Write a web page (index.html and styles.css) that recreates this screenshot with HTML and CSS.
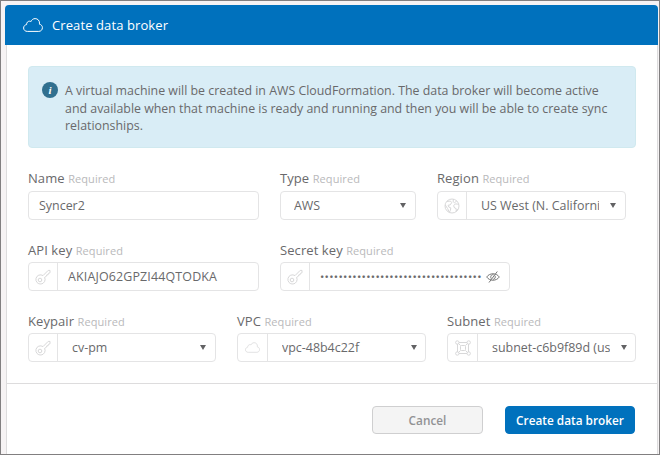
FILE: index.html
```html
<!DOCTYPE html>
<html lang="en">
<head>
<meta charset="utf-8">
<title>Create data broker</title>
<link rel="stylesheet" href="styles.css">
</head>
<body>
<svg class="defs" width="0" height="0">
  <symbol id="cloud" viewBox="0 0 20 14"><path d="M4.300 13.400C2.200 13.400.6 12 .6 10c0-1.900 1.400-3.200 3-3.400C3.500 4.500 4.900 3.200 6.500 3.200c.6 0 1.100.1 1.500.4C8.700 1.700 10.200.6 12.100.6c2.600 0 4.500 2 4.400 4.500 0 .4 0 .7-.1 1.100 1.800.3 3 1.700 3 3.500 0 2.100-1.500 3.700-3.600 3.700z"/></symbol>
  <symbol id="key" viewBox="0 0 16 16"><path d="M8 6.600 13.200 1.400H15v2.400l-1.500.5-.3 1.300-1.400.3-.3 1.200L9.600 8.400A4.600 4.600 0 1 1 8 6.600z"/><circle cx="5" cy="11" r="1.800"/></symbol>
  <symbol id="globe" viewBox="0 0 16 16"><circle cx="8" cy="8" r="7"/><path d="M3 3.500 6.400 3l1.300 1.600-1.400 2.200-2.200.5.8 1.800 1.900.8-.4 2.500-1 1.800-1.800-3.600L1.300 7M9.500 1.200 9 3.500l1.500 1.200L12.700 3M14.800 6.200l-3.500-.3-1.700 1.900 1 2.200 1.500.5.200 2.800 1.900-2.600"/></symbol>
  <symbol id="subnet" viewBox="0 0 16 16"><path d="M4 2.500h8M4 13.500h8M2.500 4v8M13.500 4v8M3.500 3.500l2 2M12.500 3.500l-2 2M3.500 12.500l2-2M12.500 12.500l-2-2"/><circle cx="2.300" cy="2.500" r="1.700"/><circle cx="13.700" cy="2.500" r="1.700"/><circle cx="2.300" cy="13.500" r="1.700"/><circle cx="13.700" cy="13.500" r="1.700"/><rect x="5.500" y="5.500" width="5" height="5" rx="1"/></symbol>
</svg>
<div class="frame">
  <section class="modal">
    <header class="header"><svg class="header-icon"><use href="#cloud"/></svg><h1>Create data broker</h1></header>
    <div class="content">
      <div class="alert">
        <span class="info">i</span>
        <p>A virtual machine will be created in AWS CloudFormation. The data broker will become active<br>and available when that machine is ready and running and then you will be able to create sync<br>relationships.</p>
      </div>
      <div class="row row-main">
        <div class="field"><label>Name <small>Required</small></label><div class="control"><span class="value">Syncer2</span></div></div>
        <div class="field"><label>Type <small>Required</small></label><div class="control select type"><span class="value">AWS</span><i class="caret"></i></div></div>
        <div class="field"><label>Region <small>Required</small></label><div class="control select"><span class="addon"><svg class="icon"><use href="#globe"/></svg></span><span class="value">US West (N. California)</span><i class="caret"></i></div></div>
      </div>
      <div class="row row-keys">
        <div class="field"><label>API key <small>Required</small></label><div class="control"><span class="addon"><svg class="icon"><use href="#key"/></svg></span><span class="value api-key">AKIAJO62GPZI44QTODKA</span></div></div>
        <div class="field"><label>Secret key <small>Required</small></label><div class="control secret"><span class="addon"><svg class="icon"><use href="#key"/></svg></span><span class="value dots">•••••••••••••••••••••••••••••••••••</span><svg class="eye" viewBox="0 0 14 12"><path d="M.7 6C3.500 1.700 10.500 1.700 13.300 6 10.500 10.300 3.500 10.300.7 6zM11.300.5 3 11.500M7.500 3.700C5 3.300 4 6 5.300 7.700M9 4.700c.8 1.500 0 3.300-1.800 3.700"/></svg></div></div>
      </div>
      <div class="row row-network">
        <div class="field"><label>Keypair <small>Required</small></label><div class="control select"><span class="addon"><svg class="icon"><use href="#key"/></svg></span><span class="value">cv-pm</span><i class="caret"></i></div></div>
        <div class="field"><label>VPC <small>Required</small></label><div class="control select wide-addon"><span class="addon"><svg class="icon small-cloud"><use href="#cloud"/></svg></span><span class="value">vpc-48b4c22f</span><i class="caret"></i></div></div>
        <div class="field"><label>Subnet <small>Required</small></label><div class="control select wide-addon"><span class="addon"><svg class="icon"><use href="#subnet"/></svg></span><span class="value">subnet-c6b9f89d (us</span><i class="caret"></i></div></div>
      </div>
    </div>
    <footer class="footer"><button class="btn cancel">Cancel</button><button class="btn primary">Create data broker</button></footer>
  </section>
</div>
</body>
</html>
```
FILE: styles.css
```css
* { box-sizing: border-box; }
body { margin: 0; font: 13px "Open Sans", sans-serif; color: #69696b; }
.defs { display: block; }
.frame { height: 455px; padding: 4px 1px 0 4px; border: 1px solid #817f80; background: #f6f3f4; overflow: hidden; }
svg { fill: none; stroke: currentColor; stroke-width: 1; flex: none; }
.modal { height: 449px; }
.header { display: flex; align-items: center; height: 40px; padding-left: 18px; background: #0071bd; color: #fff; border-radius: 4px 4px 0 0; }
.header-icon { width: 20px; height: 14px; }
h1 { margin: 0 0 0 9px; font-size: 13px; font-weight: 400; letter-spacing: .1px; }
.content { height: 339px; margin: 0 0 0 1px; padding: 21px 21px 0; background: #fff; border: solid #dddcdd; border-width: 0 1px 1px; }
.alert { display: flex; height: 82px; padding: 15px 13px; background: #d9edf6; border: 1px solid #d0e9ef; border-radius: 4px; }
.info { width: 16px; height: 16px; flex: none; border-radius: 50%; background: #31708f; color: #fff; font: italic bold 11px/16px "Liberation Serif", serif; text-align: center; }
.alert p { margin: 0 0 0 7px; font-size: 12.380px; line-height: 17.600px; white-space: nowrap; }
.row { display: grid; height: 71px; column-gap: 21px; }
.alert + .row { margin-top: 22px; }
.row-main { grid-template-columns: 231px 136px 189px; }
.row-keys { grid-template-columns: 231px 230px; }
.row-network { grid-template-columns: 188px 189px 189px; }
label { display: block; height: 21px; line-height: 17px; letter-spacing: .08px; white-space: nowrap; }
.row-keys label, .row-network label { padding-top: 1px; }
small { font-size: 11px; color: #b9b9bb; }
.control { display: flex; align-items: center; height: 29px; border: 1px solid #e4e4e5; border-radius: 4px; background: #fff; }
.addon { display: flex; align-items: center; justify-content: center; width: 29px; height: 27px; border-right: 1px solid #e4e4e5; flex: none; }
.wide-addon .addon { width: 30px; }
.icon { width: 16px; height: 16px; color: #d8d8d9; }
.small-cloud { width: 15px; height: 11px; }
.value { flex: 1; margin-left: 10px; font-size: 12.450px; white-space: nowrap; overflow: hidden; }
.select .value { margin-left: 14px; }
.type .value { margin-left: 13px; }
.api-key { letter-spacing: .15px; }
.caret { width: 6px; height: 5px; margin: 0 9px 0 11px; background: #626264; clip-path: polygon(0 0, 100% 0, 50% 100%); flex: none; }
.wide-addon .caret { margin-right: 8px; }
.secret .dots { font-size: 11.500px; letter-spacing: .300px; flex: 0 0 162px; }
.eye { width: 14px; height: 12px; margin-left: 4px; color: #777; }
.footer { display: flex; height: 70px; margin: 0 0 0 1px; padding: 22px 22px 0; justify-content: flex-end; gap: 22px; background: #fff; border: solid #dddcdd; border-width: 0 1px; }
.btn { height: 28px; padding: 0; border: 1px solid #cfcfd0; border-radius: 4px; font: 600 11.800px "Open Sans", sans-serif; }
.cancel { width: 111px; background: #f4f4f4; color: #929294; }
.primary { width: 130px; background: #0071bd; border-color: #0071bd; color: #fff; }
```
